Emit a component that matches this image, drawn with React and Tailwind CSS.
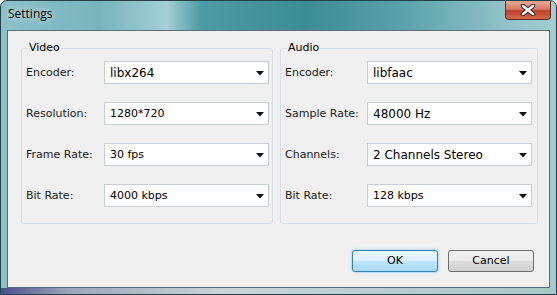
import React from "react";

const VIDEO = [
  { label: "Encoder:", value: "libx264", big: true },
  { label: "Resolution:", value: "1280*720" },
  { label: "Frame Rate:", value: "30 fps" },
  { label: "Bit Rate:", value: "4000 kbps" },
];

const AUDIO = [
  { label: "Encoder:", value: "libfaac", big: true },
  { label: "Sample Rate:", value: "48000 Hz", big: true },
  { label: "Channels:", value: "2 Channels Stereo", big: true },
  { label: "Bit Rate:", value: "128 kbps" },
];

function Combo({ value, big }) {
  return (
    <div className="w-[165px] h-[23px] shrink-0 bg-white border border-[#c9ced3] flex items-center justify-between pl-[5px] pr-[4px]">
      <span className={big ? "text-[12px] leading-none text-black pt-[1px]" : "text-[11px] leading-none text-black"}>
        {value}
      </span>
      <svg width="8" height="5" viewBox="0 0 8 5" className="mt-[2px]">
        <polygon points="0,0 8,0 4,4.5" fill="#111" />
      </svg>
    </div>
  );
}

function Group({ title, rows, width, pr }) {
  return (
    <fieldset className={`${width} ${pr} border border-[#d5dfe5] rounded-[3px] pl-[4px] pt-[6px] pb-[16px]`}>
      <legend className="ml-[2px] px-[1px] text-[11px] leading-[14px] text-black">{title}</legend>
      <div className="flex flex-col gap-[18px]">
        {rows.map((r) => (
          <div key={r.label} className="flex items-center">
            <span className="flex-1 text-[11px] leading-none text-[#1b1b1b]">{r.label}</span>
            <Combo value={r.value} big={r.big} />
          </div>
        ))}
      </div>
    </fieldset>
  );
}

export default function App() {
  return (
    <div
      className="w-[557px] h-[295px] flex flex-col border border-[#24404a] rounded-t-[7px] overflow-hidden bg-[linear-gradient(90deg,#8cc1c8_0%,#79b4bd_18%,#a3d0d4_30%,#4d9ba4_36%,#3c8c96_55%,#5aa1aa_72%,#8ec2c6_90%,#a2cdd0_100%)]"
      style={{ fontFamily: '"DejaVu Sans", Verdana, sans-serif' }}
    >
      <div className="h-[29px] shrink-0 flex justify-between items-start">
        <span
          className="ml-[7px] mt-[7px] text-[12px] leading-none text-black [text-shadow:0_0_6px_#ffffff]"
          style={{ fontFamily: '"Open Sans", "DejaVu Sans", sans-serif' }}
        >
          Settings
        </span>
        <div className="mr-[5px] w-[46px] h-[19px] rounded-b-[4px] border border-t-0 border-[#5b2a20] bg-[linear-gradient(180deg,#e9aa99_0%,#d77a63_45%,#c2402a_55%,#d06a52_100%)] flex items-center justify-center">
          <svg width="16" height="12" viewBox="0 0 16 12">
            <path d="M3 2 L13 10 M13 2 L3 10" stroke="#3a2a2a" strokeWidth="4.5" strokeLinecap="round" />
            <path d="M3 2 L13 10 M13 2 L3 10" stroke="#ffffff" strokeWidth="2.4" strokeLinecap="round" />
          </svg>
        </div>
      </div>

      <div className="mx-[6px] h-[258px] shrink-0 bg-[#f0f0f0] border border-[#5d6e78] flex flex-col">
        <div className="flex gap-[7px] ml-[13px] mt-[10px]">
          <Group title="Video" rows={VIDEO} width="w-[252px]" pr="pr-[3px]" />
          <Group title="Audio" rows={AUDIO} width="w-[258px]" pr="pr-[5px]" />
        </div>
        <div className="flex justify-end gap-[10px] mr-[15px] mt-[26px]">
          <button className="w-[86px] h-[22px] rounded-[3px] border border-[#3c7fb1] bg-[linear-gradient(180deg,#eaf6fd_0%,#d9f0fc_48%,#bee6fd_52%,#a7d9f5_100%)] shadow-[0_0_3px_#7ec4ef] text-[11px] text-black">
            OK
          </button>
          <button className="w-[86px] h-[22px] rounded-[3px] border border-[#707070] bg-[linear-gradient(180deg,#f2f2f2_0%,#ebebeb_48%,#dddddd_52%,#cfcfcf_100%)] text-[11px] text-black">
            Cancel
          </button>
        </div>
      </div>
      <div className="flex-1 bg-[linear-gradient(90deg,#4a4f8a_0%,#9aa6b8_12%,#c9d4d8_40%,#a8c6cb_100%)]" />
    </div>
  );
}
